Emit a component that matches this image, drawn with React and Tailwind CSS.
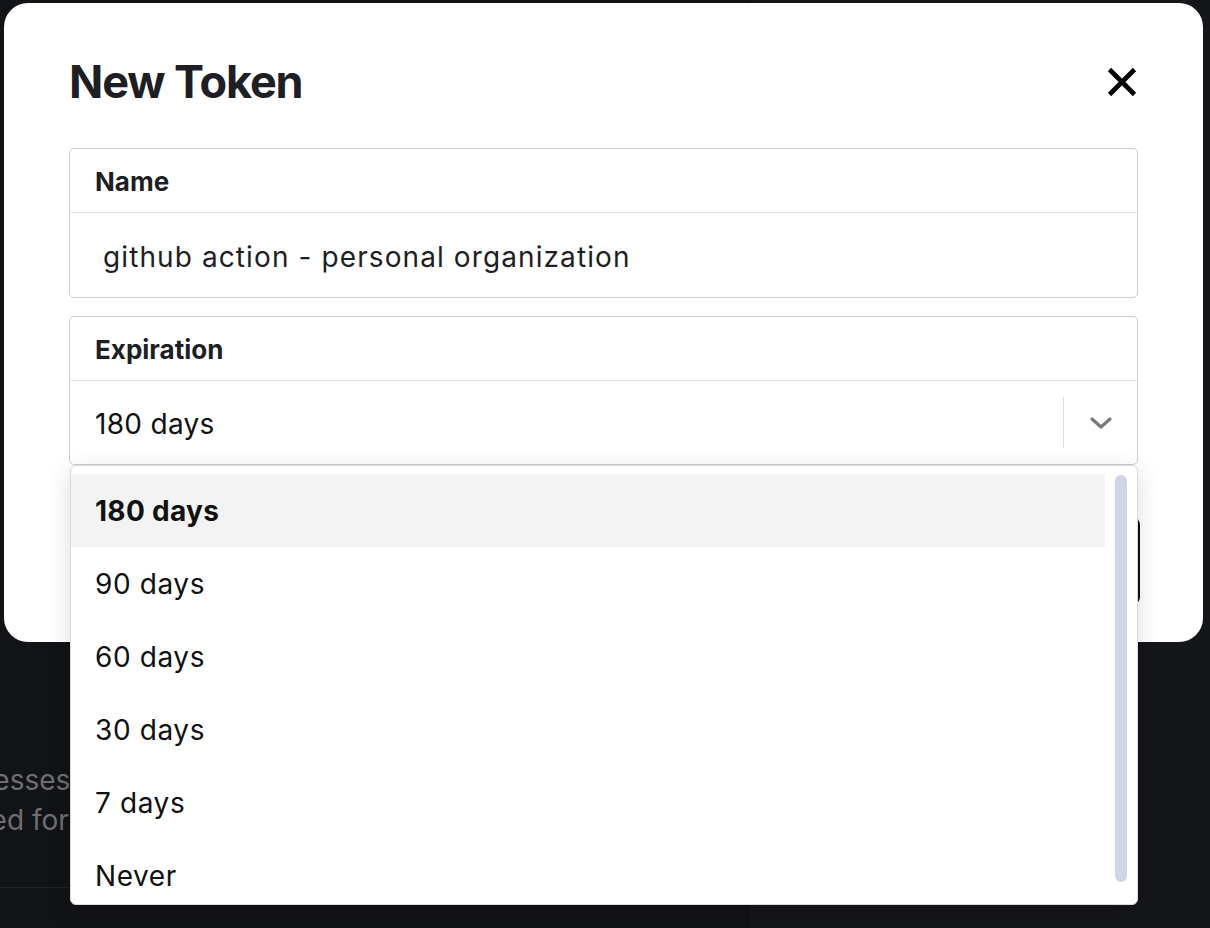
import React from "react";

const font = { fontFamily: "Inter, 'Noto Sans', sans-serif" };

export default function App() {
  const options = ["180 days", "90 days", "60 days", "30 days", "7 days", "Never"];
  return (
    <div
      className="relative h-[928px] w-[1210px] overflow-hidden bg-[#131418] text-[#111]"
      style={font}
    >
      {/* background page */}
      <div className="flex h-full">
        <div className="flex w-[749px] flex-col border-r border-[#0b0c0f] bg-[#121317]">
          <div className="h-[760px]" />
          <div className="-ml-[58px] whitespace-nowrap text-[28px] leading-[40px] text-[#6e6f73]">
            <div>Accesses</div>
            <div className="ml-[13px]">Used for</div>
          </div>
          <div className="mt-[47px] border-t border-[#202126]" />
        </div>
        <div className="flex-1 bg-[#15161a]" />
      </div>

      {/* modal */}
      <div className="absolute left-[4px] top-[3px] w-[1199px] rounded-[24px] bg-white px-[65px] pb-[37px] pt-[56px]">
        <div className="flex h-[44px] items-center justify-between">
          <h1 className="text-[45px] font-bold leading-none tracking-[-1.1px] text-[#1d1f24]">
            New Token
          </h1>
          <svg width="30" height="30" viewBox="0 0 30 30" className="mr-[1px] mt-[2px]">
            <path d="M2.5 2.5 L27.5 27.5 M27.5 2.5 L2.5 27.5" stroke="#000" strokeWidth="4.6" strokeLinecap="butt" />
          </svg>
        </div>

        <div className="mt-[45px] rounded-[5px] border border-[#cfcfcf]">
          <div className="flex h-[64px] items-center border-b border-[#e2e2e2] pl-[25px] pt-[2px] text-[26px] font-bold text-[#1d1f24]">
            Name
          </div>
          <div className="flex h-[84px] items-center pl-[33px] pt-[3px] text-[28px] tracking-[1.1px] text-[#1d1f24]">
            github action - personal organization
          </div>
        </div>

        <div className="relative mt-[18px] rounded-[5px] border border-[#cfcfcf]">
          <div className="flex h-[64px] items-center border-b border-[#e2e2e2] pl-[25px] pt-[2px] text-[26px] font-bold text-[#1d1f24]">
            Expiration
          </div>
          <div className="flex h-[83px] items-center">
            <div className="flex-1 pl-[25px] pt-[3px] text-[28px] tracking-[0.3px] text-[#111]">180 days</div>
            <div className="h-[51px] w-px bg-[#dedede]" />
            <div className="flex w-[73px] items-center justify-center">
              <svg width="24" height="14" viewBox="0 0 24 14">
                <path d="M3 3 L12 11 L21 3" fill="none" stroke="#7a7a7a" strokeWidth="3.2" strokeLinecap="round" strokeLinejoin="round" />
              </svg>
            </div>
          </div>

          {/* dropdown menu */}
          <div className="absolute left-0 top-[calc(100%+1px)] z-10 h-[440px] w-[1068px] overflow-hidden rounded-[6px] border border-[#dadada] bg-white pt-[8px] shadow-[0_6px_24px_rgba(0,0,0,0.14)]">
            <div className="mr-[32px] flex flex-col">
              {options.map((o, i) => (
                <div
                  key={o}
                  className={
                    i === 0
                      ? "flex h-[73px] shrink-0 items-center bg-[#f3f3f3] pl-[24px] text-[28px] font-bold tracking-[0.3px] text-[#111]"
                      : "flex h-[73px] shrink-0 items-center pl-[24px] text-[28px] tracking-[0.6px] text-[#111]"
                  }
                >
                  {o}
                </div>
              ))}
            </div>
            <div className="absolute right-[10px] top-[9px] h-[407px] w-[12px] rounded-full bg-[#cfd5e4]" />
          </div>
        </div>

        <div className="-mr-[2px] mt-[52px] flex justify-end">
          <div className="h-[88px] w-[220px] rounded-[8px] bg-[#0e0f12]" />
        </div>
      </div>
    </div>
  );
}
